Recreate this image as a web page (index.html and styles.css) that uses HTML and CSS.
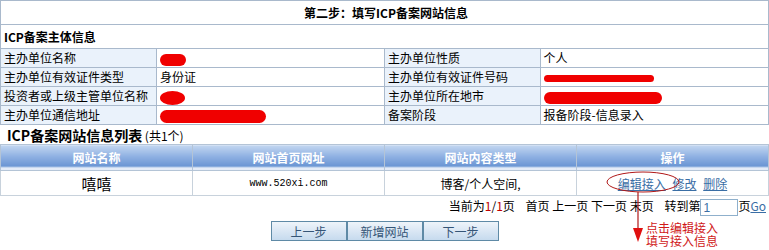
FILE: index.html
```html
<!DOCTYPE html>
<html lang="zh-CN">
<head>
    <meta charset="UTF-8">
    <title>第二步：填写ICP备案网站信息</title>
    <link rel="stylesheet" href="styles.css">
</head>
<body>
    <table class="info">
        <tr><td colspan="4" class="title">第二步：填写ICP备案网站信息</td></tr>
        <tr><td colspan="4" class="section">ICP备案主体信息</td></tr>
        <tr>
            <td class="label">主办单位名称</td>
            <td class="value"><span class="blot b1"></span></td>
            <td class="label">主办单位性质</td>
            <td class="value">个人</td>
        </tr>
        <tr>
            <td class="label">主办单位有效证件类型</td>
            <td class="value">身份证</td>
            <td class="label">主办单位有效证件号码</td>
            <td class="value"><span class="blot b2"></span></td>
        </tr>
        <tr>
            <td class="label">投资者或上级主管单位名称</td>
            <td class="value"><span class="blot b3"></span></td>
            <td class="label">主办单位所在地市</td>
            <td class="value"><span class="blot b4"></span></td>
        </tr>
        <tr>
            <td class="label">主办单位通信地址</td>
            <td class="value"><span class="blot b5"></span></td>
            <td class="label">备案阶段</td>
            <td class="value">报备阶段-信息录入</td>
        </tr>
    </table>

    <div class="list-title"><b>ICP备案网站信息列表</b> <span>(共1个)</span></div>

    <div class="sites-wrap">
        <table class="sites">
            <tr>
                <th>网站名称</th>
                <th>网站首页网址</th>
                <th>网站内容类型</th>
                <th>操作</th>
            </tr>
            <tr>
                <td class="name">嘻嘻</td>
                <td class="url">www.520xi.com</td>
                <td>博客/个人空间,</td>
                <td class="ops"><a href="#">编辑接入</a> <a href="#">修改</a> <a href="#">删除</a></td>
            </tr>
        </table>

        <!-- annotation drawn over the list -->
        <svg class="note-mark" width="120" height="80" viewBox="0 0 120 80">
            <ellipse cx="37" cy="11" rx="36" ry="10" fill="none" stroke="#b01818" stroke-width="1"/>
            <line x1="32" y1="21" x2="32" y2="62" stroke="#b01818" stroke-width="1.2"/>
            <polygon points="27,57 37,57 32,71" fill="#e01010"/>
        </svg>
        <div class="note-text">
            <div>点击编辑接入</div>
            <div>填写接入信息</div>
        </div>
    </div>

    <div class="pager">
        当前为<em>1</em>/<em>1</em>页 &nbsp;&nbsp; 首页 上一页 下一页 末页 &nbsp;&nbsp; 转到第<input type="text" value="1">页<a href="#">Go</a>
    </div>

    <div class="buttons">
        <button>上一步</button><button>新增网站</button><button>下一步</button>
    </div>
</body>
</html>
```

FILE: styles.css
```css
body {
    margin: 0;
    min-height: 250px;
    font-family: "Noto Sans CJK SC", "Liberation Sans", sans-serif;
    font-size: 12px;
    color: #000;
    background: #fff;
}
table {
    border-collapse: collapse;
    width: 100%;
}
.info td {
    border: 1px solid #a9b9cc;
    padding: 0 0 0 3px;
    height: 18px;
    line-height: 18px;
    white-space: nowrap;
}
.info .title {
    height: 23px;
    text-align: center;
    font-weight: bold;
}
.info .section {
    height: 23px;
    font-weight: bold;
}
.info .label {
    background: #eaf2fb;
    width: 152px;
}
.info .value {
    width: 226px;
}
.blot {
    display: inline-block;
    vertical-align: middle;
    background: #f00000;
    border-radius: 8px;
}
.b1 { width: 26px; height: 12px; }
.b2 { width: 110px; height: 7px; }
.b3 { width: 25px; height: 14px; border-radius: 50%; }
.b4 { width: 118px; height: 12px; }
.b5 { width: 106px; height: 13px; }

.list-title {
    padding: 2px 0 0 7px;
    height: 17px;
    line-height: 17px;
}
.list-title b {
    font-size: 14px;
}
.sites-wrap {
    position: relative;
}
.sites th {
    height: 23px;
    color: #fff;
    font-weight: bold;
    border: 1px solid #b4c4d6;
    background: linear-gradient(#c2d6f0, #8eb0e2 45%, #6b96d4 82%, #e4ecf8 90%, #e4ecf8);
    width: 25%;
}
.sites td {
    height: 22px;
    text-align: center;
    border: 1px solid #c8d2dc;
}
.sites .name {
    font-size: 15px;
}
.sites .url {
    font-family: "Liberation Mono", monospace;
    font-size: 10px;
}
.ops a {
    color: #3a6ea5;
    margin: 0 2px;
}
.note-mark {
    position: absolute;
    left: 606px;
    top: 27px;
}
.note-text {
    position: absolute;
    left: 646px;
    top: 77px;
    color: #d01818;
}
.note-text div {
    height: 13px;
    line-height: 13px;
}
.pager {
    text-align: right;
    padding: 1px 3px 0 0;
    height: 20px;
    line-height: 18px;
}
.pager em {
    font-style: normal;
    color: #c00000;
}
.pager input {
    width: 32px;
    height: 15px;
    padding: 0 2px;
    border: 1px solid #8fb0cc;
    font-size: 12px;
    color: #3a6ea5;
    vertical-align: middle;
}
.pager a {
    color: #3a6ea5;
}
.buttons {
    display: flex;
    justify-content: center;
    padding-top: 4px;
}
.buttons button {
    width: 76px;
    height: 20px;
    margin: 0;
    padding: 0;
    border: 1px solid #5f8aa6;
    background: linear-gradient(#eef4fa, #c6daee);
    color: #355577;
    font-family: inherit;
    font-size: 12px;
}
```
